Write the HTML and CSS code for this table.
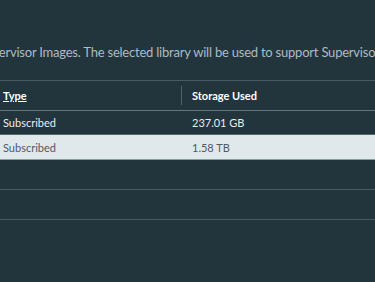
FILE: index.html
```
<!DOCTYPE html>
<html lang="en">
<head>
  <meta charset="UTF-8" />
  <title>Content Library</title>
  <link rel="stylesheet" href="styles.css">
</head>
<body>

  <div class="page">
    <!-- Description -->
    <p class="intro">Supervisor Images. The selected library will be used to support Supervisor Clusters.</p>

    <!-- Library grid -->
    <div class="grid">
      <div class="grid-row grid-head">
        <div class="cell col-type"><span class="sort">Type</span></div>
        <div class="cell col-storage">Storage Used</div>
      </div>
      <div class="grid-row">
        <div class="cell col-type">Subscribed</div>
        <div class="cell col-storage">237.01 GB</div>
      </div>
      <div class="grid-row selected">
        <div class="cell col-type">Subscribed</div>
        <div class="cell col-storage">1.58 TB</div>
      </div>
    </div>

    <div class="blank-row"></div>
    <div class="blank-row"></div>
  </div>

</body>
</html>
```

FILE: styles.css
```
* {
  box-sizing: border-box;
}

body {
  margin: 0;
  padding: 0;
  background: #22343c;
  font-family: 'Lato', 'Open Sans', sans-serif;
  color: #e9ecef;
  height: 100vh;
  overflow: hidden;
}

.page {
  padding-top: 44px;
  overflow: hidden;
}

.intro {
  margin: 0 0 0 -22px;
  white-space: nowrap;
  font-size: 13px;
  line-height: 16px;
  letter-spacing: -0.22px;
  color: #adbbc4;
}

/* Grid */
.grid {
  margin-top: 20px;
  margin-left: -9px;
  border-top: 1px solid #485a62;
  border-bottom: 1px solid #8c9ba1;
}

.grid-row {
  display: flex;
  height: 24px;
  border-bottom: 1px solid #55666e;
  font-size: 11px;
}

.grid-row:last-child {
  border-bottom: none;
}

.grid-head {
  height: 30px;
  font-weight: 700;
  color: #ffffff;
  border-bottom-color: #66767d;
}

.cell {
  display: flex;
  align-items: center;
  padding: 0 12px;
}

.col-type {
  width: 190px;
}

.col-storage {
  flex: 1;
  padding-left: 11px;
}

.grid-head .col-storage {
  position: relative;
}

.grid-head .col-storage::before {
  content: "";
  position: absolute;
  left: 0;
  top: 5px;
  bottom: 5px;
  width: 1px;
  background: #4f6068;
}

.sort {
  text-decoration: underline;
}

.selected {
  background: #e1e8eb;
  color: #4f5a60;
}

.blank-row {
  height: 30px;
  border-bottom: 1px solid #485a62;
}
```
